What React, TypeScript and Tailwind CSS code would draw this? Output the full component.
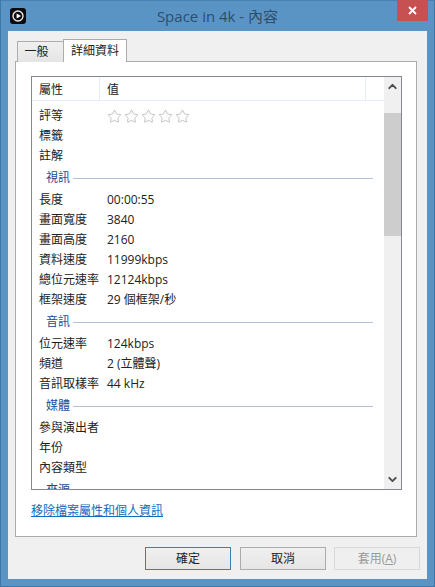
import type { ReactNode } from "react";
import { ChevronDown, ChevronUp, Star } from "lucide-react";

const font = "font-['Open_Sans','Noto_Sans_CJK_TC',sans-serif]";

const Row = ({ name, value }: { name: string; value?: string }) => (
  <div className="flex h-5 items-center whitespace-nowrap">
    <div className="w-[75px] pl-[7px]">{name}</div>
    <div>{value}</div>
  </div>
);

const Section = ({ title }: { title: string }) => (
  <div className="flex h-6 items-center gap-[3px] pl-[14px] pr-[11px]">
    <span className="text-[#1f4a94]">{title}</span>
    <div className="h-px flex-1 bg-[#b4bfd0]" />
  </div>
);

const DialogButton = ({
  label,
  className,
}: {
  label: ReactNode;
  className: string;
}) => (
  <button className={`h-[23px] w-[86px] border text-xs ${className}`}>
    {label}
  </button>
);

export default function App() {
  return (
    <div
      className={`flex h-[587px] w-[435px] flex-col overflow-hidden border-x border-b border-[#3f78a8] bg-[#5a94c5] text-xs text-[#222222] ${font}`}
    >
      {/* Title bar */}
      <div className="grid h-[31px] shrink-0 grid-cols-[1fr_auto_1fr] border-t border-[#4a80ad]">
        <div className="pl-[9px] pt-[7px]">
          <svg width="16" height="16" viewBox="0 0 16 16">
            <rect width="16" height="16" rx="3" fill="#0a0a0f" />
            <circle cx="8" cy="8" r="5" fill="none" stroke="#e8e8e8" strokeWidth="1.4" />
            <path d="M6.6 5.4 L11 8 L6.6 10.6 Z" fill="#ffffff" />
          </svg>
        </div>
        <div className="pt-[4px] text-[15px] leading-[22px] text-[#2c4f6e]">
          Space in 4k - 內容
        </div>
        <div className="flex justify-end pr-[6px]">
          <div className="-mt-px flex h-[21px] w-[31px] items-center justify-center bg-[#c75050]">
            <svg width="9" height="9" viewBox="0 0 9 9">
              <path d="M1 1 L8 8 M8 1 L1 8" stroke="#ffffff" strokeWidth="1.8" />
            </svg>
          </div>
        </div>
      </div>

      {/* Client area */}
      <div className="mx-[7px] flex h-[548px] flex-col bg-[#f0f0f0] pl-[7px] pr-[7px] pt-2">
        {/* Tabs */}
        <div className="relative z-10 -mb-px flex h-[23px] items-end pl-[2px]">
          <div className="flex h-[21px] w-[46px] items-center justify-center border border-b-0 border-r-0 border-[#acacac] bg-gradient-to-b from-[#f0f0f0] to-[#e5e5e5] pr-2">
            一般
          </div>
          <div className="flex h-[23px] w-[64px] items-center justify-center border border-b-0 border-[#acacac] bg-white">
            詳細資料
          </div>
        </div>

        {/* Panel */}
        <div className="h-[476px] w-[402px] border border-[#acacac] bg-white pl-[15px] pr-[14px] pt-[14px]">
          <div className="flex h-[414px] border border-[#828790]">
            <div className="flex min-w-0 flex-1 flex-col overflow-hidden">
              <div className="flex h-[24px] shrink-0 border-b border-[#e5ecf4]">
                <div className="flex w-[68px] items-center border-r border-[#e5ecf4] pl-[7px] pt-[2px]">
                  屬性
                </div>
                <div className="flex flex-1 items-center border-r border-[#e5ecf4] pl-[7px] pt-[2px]">
                  值
                </div>
                <div className="w-[18px]" />
              </div>
              <div className="pt-[5px]">
                <div className="flex h-5 items-center">
                  <div className="w-[75px] pl-[7px]">評等</div>
                  <div className="flex gap-[2px]">
                    {[0, 1, 2, 3, 4].map((i) => (
                      <Star key={i} size={15} strokeWidth={1.3} className="text-[#b4b4b4]" />
                    ))}
                  </div>
                </div>
                <Row name="標籤" />
                <Row name="註解" />
                <Section title="視訊" />
                <Row name="長度" value="00:00:55" />
                <Row name="畫面寬度" value="3840" />
                <Row name="畫面高度" value="2160" />
                <Row name="資料速度" value="11999kbps" />
                <Row name="總位元速率" value="12124kbps" />
                <Row name="框架速度" value="29 個框架/秒" />
                <Section title="音訊" />
                <Row name="位元速率" value="124kbps" />
                <Row name="頻道" value="2 (立體聲)" />
                <Row name="音訊取樣率" value="44 kHz" />
                <Section title="媒體" />
                <Row name="參與演出者" />
                <Row name="年份" />
                <Row name="內容類型" />
                <Section title="來源" />
              </div>
            </div>

            {/* Scrollbar */}
            <div className="flex w-[17px] shrink-0 flex-col bg-[#f0f0f0]">
              <div className="flex h-[36px] justify-center pt-[3px] text-[#4d4d4d]">
                <ChevronUp size={13} strokeWidth={3.5} />
              </div>
              <div className="h-[123px] bg-[#cdcdcd]" />
              <div className="flex flex-1 items-end justify-center pb-[3px] text-[#4d4d4d]">
                <ChevronDown size={13} strokeWidth={3.5} />
              </div>
            </div>
          </div>

          <div className="pt-[12px] leading-[18px]">
            <span className="text-[#0f6cbd] underline">移除檔案屬性和個人資訊</span>
          </div>
        </div>

        {/* Buttons */}
        <div className="flex justify-end pt-[10px]">
          <DialogButton
            label="確定"
            className="border-[#3c7fb1] bg-gradient-to-b from-[#f0f0f0] to-[#e5e5e5]"
          />
          <DialogButton
            label="取消"
            className="ml-[9px] border-[#acacac] bg-gradient-to-b from-[#f0f0f0] to-[#e5e5e5]"
          />
          <DialogButton
            label={
              <>
                套用(<span className="underline">A</span>)
              </>
            }
            className="ml-2 border-[#d9d9d9] bg-[#efefef] text-[#9a9a9a]"
          />
        </div>
      </div>
    </div>
  );
}
